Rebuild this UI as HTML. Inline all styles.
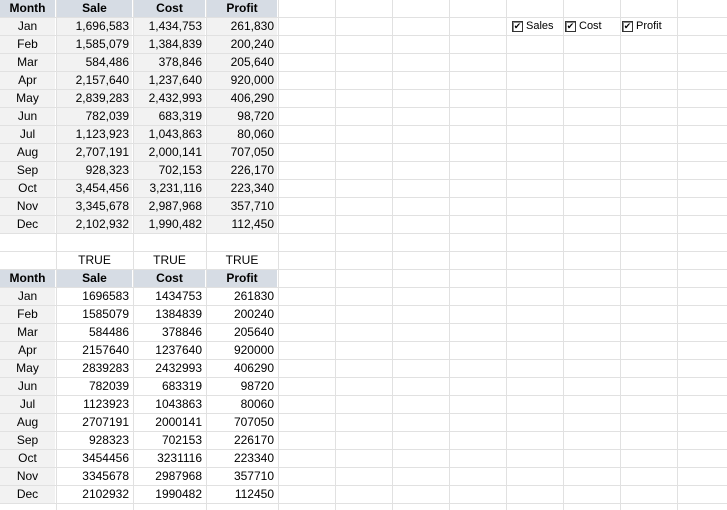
<!DOCTYPE html>
<html><head><meta charset="utf-8"><style>
body{margin:0;width:727px;height:510px;overflow:hidden;background:#fff;font-family:"Liberation Sans",sans-serif;font-size:12px;color:#000;position:relative}
.c{position:absolute;box-sizing:border-box;height:17px;line-height:17px;white-space:nowrap;padding:0 3px}
.g{position:absolute;background:#e1e1e1}
.cb{position:absolute;top:20px;font-size:11px;line-height:12px;display:flex;align-items:center;gap:3px;color:#000}
.cb span.b{width:9px;height:9px;border:1px solid #333;background:#fff;font-size:9px;line-height:9px;text-align:center;box-shadow:inset 1px 1px 0 #888}
</style></head><body>
<div id="root"></div>
<div class="cb" style="left:512px"><span class="b">✔</span>Sales</div>
<div class="cb" style="left:565px"><span class="b">✔</span>Cost</div>
<div class="cb" style="left:622px"><span class="b">✔</span>Profit</div>
<script>
var r=document.getElementById('root'),h='';
var cols=[0,57,134,207,279,336,393,450,507,564,621,678,735];
for(var i=1;i<cols.length;i++)h+='<div class="g" style="left:'+(cols[i]-1)+'px;top:0;width:1px;height:510px"></div>';
for(var y=17;y<510;y+=18)h+='<div class="g" style="left:0;top:'+y+'px;width:727px;height:1px"></div>';
var m=['Jan','Feb','Mar','Apr','May','Jun','Jul','Aug','Sep','Oct','Nov','Dec'];
var d=[[1696583,1434753],[1585079,1384839],[584486,378846],[2157640,1237640],[2839283,2432993],[782039,683319],[1123923,1043863],[2707191,2000141],[928323,702153],[3454456,3231116],[3345678,2987968],[2102932,1990482]];
function fmt(n){return n.toString().replace(/\B(?=(\d{3})+(?!\d))/g,',')}
function cell(ci,row,txt,bg,al,bold){
 var x=cols[ci],w=cols[ci+1]-cols[ci]-2;
 h+='<div class="c" style="left:'+x+'px;top:'+(row*18)+'px;width:'+w+'px;background:'+bg+';text-align:'+al+(bold?';font-weight:bold':'')+'">'+txt+'</div>';
}
function hdr(row){var t=['Month','Sale','Cost','Profit'];for(var i=0;i<4;i++)cell(i,row,t[i],'#d6dce4','center',1);}
hdr(0);
for(var k=0;k<12;k++){var p=d[k][0]-d[k][1];cell(0,k+1,m[k],'#f2f2f2','center');cell(1,k+1,fmt(d[k][0]),'#f2f2f2','right');cell(2,k+1,fmt(d[k][1]),'#f2f2f2','right');cell(3,k+1,fmt(p),'#f2f2f2','right');}
for(var i=1;i<4;i++)cell(i,14,'TRUE','#fff','center');
hdr(15);
for(var k=0;k<12;k++){var p=d[k][0]-d[k][1];cell(0,k+16,m[k],'#f2f2f2','center');cell(1,k+16,d[k][0],'#fff','right');cell(2,k+16,d[k][1],'#fff','right');cell(3,k+16,p,'#fff','right');}
r.innerHTML=h;
</script>
</body></html>
